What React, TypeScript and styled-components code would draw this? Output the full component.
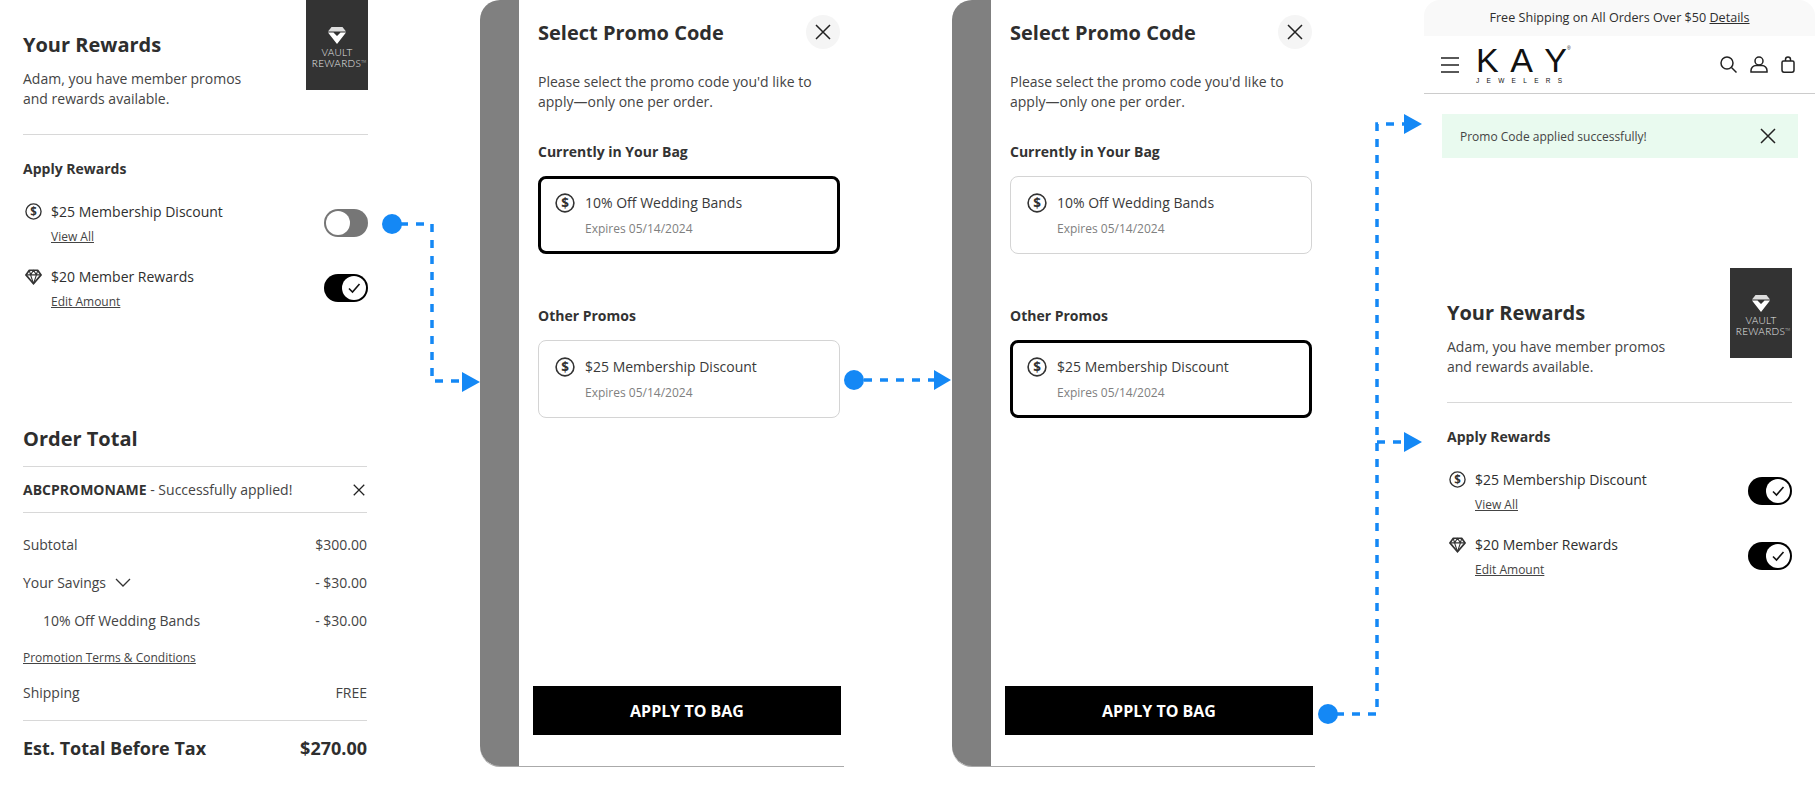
import styled, { createGlobalStyle } from 'styled-components'

const GlobalStyle = createGlobalStyle`
  html, body {
    margin: 0;
    padding: 0;
    background: #fff;
    font-family: "Open Sans", "Liberation Sans", sans-serif;
    color: #333;
  }
`

const Page = styled.div`
  position: relative;
  display: flex;
  align-items: flex-start;
  width: 1815px;
  height: 791px;
  overflow: hidden;
`

const LeftColumn = styled.div`
  flex: none;
  width: 345px;
  margin-left: 23px;
`

const RightColumn = styled.div`
  flex: none;
  width: 391px;
  margin-left: 109px;
`

// rewards panel, used in the first and last column
const RewardsPanel = styled.section<{ $top?: number; $left?: number }>`
  width: 345px;
  padding-top: ${(p) => p.$top ?? 0}px;
  padding-left: ${(p) => p.$left ?? 0}px;
`

const RewardsHeader = styled.div`
  display: flex;
  justify-content: space-between;
  height: 90px;
`

const PanelTitle = styled.h2`
  margin: 0;
  font-size: 20px;
  line-height: 28px;
  font-weight: 700;
  color: #2e2e2e;
`

const RewardsIntro = styled.div`
  padding-top: 31px;
`

const BodyText = styled.p`
  margin: 10px 0 0;
  font-size: 14px;
  line-height: 20px;
  color: #444;
`

const Badge = styled.div`
  display: flex;
  flex-direction: column;
  align-items: center;
  width: 62px;
  height: 90px;
  padding-top: 27px;
  box-sizing: border-box;
  background: #333;
  color: #e8e8e8;
  font-family: Lato, "Liberation Sans", sans-serif;
  font-size: 10px;
  font-weight: 300;
  line-height: 11px;
  letter-spacing: 0.3px;
  text-align: center;
`

const BadgeText = styled.span`
  margin-top: 3px;
`

const TradeMark = styled.sup`
  margin-right: -4px;
  font-size: 3px;
  line-height: 0;
`

const Rule = styled.hr<{ $mt?: number }>`
  height: 1px;
  margin: ${(p) => p.$mt ?? 0}px 0 0;
  border: 0;
  background: #d8d8d8;
`

const SectionLabel = styled.h3<{ $mt?: number }>`
  margin: ${(p) => p.$mt ?? 0}px 0 0;
  font-size: 14px;
  line-height: 20px;
  font-weight: 700;
  color: #333;
`

const RewardList = styled.div`
  margin-top: 23px;
`

const RewardRow = styled.div`
  display: grid;
  grid-template-columns: 28px 1fr 44px;
  height: 65px;
`

const RewardIcon = styled.div`
  padding: 1px 0 0 2px;
`

const RewardTitle = styled.div`
  font-size: 14px;
  line-height: 20px;
  color: #2e2e2e;
`

const SmallLink = styled.a`
  display: block;
  font-size: 12px;
  line-height: 18px;
  color: #444;
  text-decoration: underline;
`

const RewardLink = styled(SmallLink)`
  margin-top: 6px;
`

const Toggle = styled.div<{ $on: boolean }>`
  display: flex;
  align-items: center;
  justify-content: ${(p) => (p.$on ? 'flex-end' : 'flex-start')};
  width: 44px;
  height: 28px;
  margin-top: 7px;
  padding: 2px;
  box-sizing: border-box;
  border-radius: 14px;
  background: ${(p) => (p.$on ? '#000' : '#767676')};
`

const ToggleKnob = styled.div`
  display: flex;
  align-items: center;
  justify-content: center;
  width: 24px;
  height: 24px;
  border-radius: 50%;
  background: #fff;
`

// order total
const OrderTotal = styled.section`
  width: 344px;
  margin-top: 93px;
`

const TitleRule = styled(Rule)`
  margin-top: 13px;
`

const PromoRow = styled.div`
  display: flex;
  align-items: center;
  justify-content: space-between;
  height: 46px;
  padding-right: 2px;
  box-sizing: border-box;
  border-bottom: 1px solid #d8d8d8;
  font-size: 14px;
  color: #444;
`

const PromoName = styled.strong`
  font-weight: 700;
  color: #333;
`

const SummaryRows = styled.div`
  padding-top: 12px;
`

const SummaryRow = styled.div<{ $indent?: boolean }>`
  display: flex;
  align-items: center;
  justify-content: space-between;
  height: 38px;
  padding-left: ${(p) => (p.$indent ? 20 : 0)}px;
  font-size: 14px;
  color: #444;
`

const SavingsLabel = styled.span`
  display: flex;
  align-items: center;
  gap: 9px;
`

const TermsLink = styled(SmallLink)`
  height: 34px;
  line-height: 38px;
`

const TotalRow = styled.div`
  display: flex;
  align-items: center;
  justify-content: space-between;
  height: 54px;
  font-size: 18px;
  font-weight: 700;
  color: #2e2e2e;
`

// promo modal
const Modal = styled.section<{ $ml: number; $width: number }>`
  flex: none;
  display: flex;
  width: ${(p) => p.$width}px;
  height: 767px;
  margin-left: ${(p) => p.$ml}px;
  box-sizing: border-box;
  border-bottom: 1px solid #aaa;
  border-radius: 0 0 0 20px;
`

const ModalStrip = styled.div`
  flex: none;
  width: 39px;
  background: #808080;
  border-radius: 20px 0 0 20px;
`

const ModalBody = styled.div`
  display: flex;
  flex: 1;
  flex-direction: column;
  padding: 15px 0 31px 19px;
  box-sizing: border-box;
`

const ModalHeader = styled.div`
  display: flex;
  align-items: center;
  justify-content: space-between;
  width: 302px;
  height: 34px;
`

const ModalTitle = styled(PanelTitle)`
  padding-top: 2px;
`

const CloseCircle = styled.div`
  display: flex;
  align-items: center;
  justify-content: center;
  width: 34px;
  height: 34px;
  border-radius: 50%;
  background: #f5f5f5;
`

const ModalText = styled(BodyText)`
  width: 302px;
  margin-top: 23px;
`

const PromoCard = styled.div<{ $selected: boolean }>`
  display: grid;
  grid-template-columns: 30px 1fr;
  width: 302px;
  height: 78px;
  margin-top: 14px;
  box-sizing: border-box;
  padding: ${(p) => (p.$selected ? '14px 0 0 14px' : '16px 0 0 16px')};
  border: ${(p) => (p.$selected ? '3px solid #000' : '1px solid #d4d4d4')};
  border-radius: 8px;
`

const CardTitle = styled.div`
  font-size: 14px;
  line-height: 20px;
  color: #3a3a3a;
`

const CardExpiry = styled.div`
  margin-top: 7px;
  font-size: 12px;
  line-height: 18px;
  color: #808080;
`

const ApplyButton = styled.button`
  width: 308px;
  height: 49px;
  margin: auto 0 0 -5px;
  border: 0;
  background: #000;
  color: #fff;
  font-family: inherit;
  font-size: 16px;
  font-weight: 700;
`

// site header in the last column
const PromoStrip = styled.div`
  height: 36px;
  border-radius: 16px 16px 0 0;
  background: #f9f9f9;
  font-size: 12.6px;
  line-height: 36px;
  text-align: center;
  color: #2e2e2e;
`

const StripLink = styled.a`
  text-decoration: underline;
`

const SiteHeader = styled.header`
  display: flex;
  align-items: center;
  height: 57px;
  padding: 0 20px 0 17px;
  border-bottom: 1px solid #ccc;
`

const Logo = styled.div`
  margin-left: 17px;
  color: #111;
  font-family: "Liberation Sans", Arial, sans-serif;
`

const LogoMark = styled.div`
  font-size: 34px;
  line-height: 30px;
  letter-spacing: 11.5px;
`

const LogoLastLetter = styled.span`
  letter-spacing: 0;
`

const LogoReg = styled.sup`
  font-size: 5px;
  letter-spacing: 0;
  line-height: 0;
  vertical-align: 22px;
`

const LogoSub = styled.div`
  margin-top: 2px;
  font-size: 6.5px;
  line-height: 7px;
  letter-spacing: 7.3px;
`

const HeaderIcons = styled.div`
  display: flex;
  align-items: center;
  gap: 13px;
  margin-left: auto;
`

const SuccessAlert = styled.div`
  display: flex;
  align-items: center;
  justify-content: space-between;
  width: 356px;
  height: 44px;
  margin: 20px 0 0 18px;
  padding: 0 22px 0 18px;
  box-sizing: border-box;
  background: #e9faef;
  font-size: 12px;
  color: #444;
`

const Connectors = styled.svg`
  position: absolute;
  top: 0;
  left: 0;
  pointer-events: none;
`

function DollarIcon({ size = 17 }: { size?: number }) {
  return (
    <svg width={size} height={size} viewBox="0 0 20 20">
      <circle cx="10" cy="10" r="8.9" fill="none" stroke="#333" strokeWidth="1.6" />
      <text x="10" y="14.800" textAnchor="middle" fontSize="13.500" fontWeight="700" fill="#333" fontFamily="Open Sans">$</text>
    </svg>
  )
}

function GemIcon() {
  return (
    <svg width="17" height="16" viewBox="0 0 20 19" fill="none" stroke="#333" strokeWidth="2" strokeLinejoin="round">
      <path d="M5 1.500h10l4 5.500-9 10.500L1 7z" />
      <path d="M1 7h18M6.500 7 10 17.500 13.500 7M5 1.500 6.500 7 10 1.500 13.500 7 15 1.500" strokeWidth="1.300" />
    </svg>
  )
}

function CloseIcon({ size = 16, width = 1.5 }: { size?: number; width?: number }) {
  return (
    <svg width={size} height={size} viewBox="0 0 16 16" stroke="#222" strokeWidth={width}>
      <path d="M1 1l14 14M15 1 1 15" />
    </svg>
  )
}

function ToggleSwitch({ on }: { on: boolean }) {
  return (
    <Toggle $on={on}>
      <ToggleKnob>
        {on && (
          <svg width="14" height="12" viewBox="0 0 14 12" fill="none" stroke="#111" strokeWidth="1.6">
            <path d="M2 6.500 5.500 10 12.500 2" />
          </svg>
        )}
      </ToggleKnob>
    </Toggle>
  )
}

function Rewards({ top, left, firstOn }: { top?: number; left?: number; firstOn: boolean }) {
  return (
    <RewardsPanel $top={top} $left={left}>
      <RewardsHeader>
        <RewardsIntro>
          <PanelTitle>Your Rewards</PanelTitle>
          <BodyText>
            Adam, you have member promos
            <br />
            and rewards available.
          </BodyText>
        </RewardsIntro>
        <Badge>
          <svg width="18" height="17" viewBox="0 0 18 17">
            <path d="M3.500 0h11L18 4.500H0z" fill="#ddd" />
            <path d="M0 5.500h5.500L9 9l3.500-3.500H18L9 17z" fill="#fff" />
          </svg>
          <BadgeText>
            VAULT
            <br />
            REWARDS<TradeMark>TM</TradeMark>
          </BadgeText>
        </Badge>
      </RewardsHeader>
      <Rule $mt={44} />
      <SectionLabel $mt={24}>Apply Rewards</SectionLabel>
      <RewardList>
        <RewardRow>
          <RewardIcon>
            <DollarIcon />
          </RewardIcon>
          <div>
            <RewardTitle>$25 Membership Discount</RewardTitle>
            <RewardLink>View All</RewardLink>
          </div>
          <ToggleSwitch on={firstOn} />
        </RewardRow>
        <RewardRow>
          <RewardIcon>
            <GemIcon />
          </RewardIcon>
          <div>
            <RewardTitle>$20 Member Rewards</RewardTitle>
            <RewardLink>Edit Amount</RewardLink>
          </div>
          <ToggleSwitch on />
        </RewardRow>
      </RewardList>
    </RewardsPanel>
  )
}

function Card({ title, selected }: { title: string; selected: boolean }) {
  return (
    <PromoCard $selected={selected}>
      <DollarIcon size={20} />
      <div>
        <CardTitle>{title}</CardTitle>
        <CardExpiry>Expires 05/14/2024</CardExpiry>
      </div>
    </PromoCard>
  )
}

function PromoModal({ ml, width, selected }: { ml: number; width: number; selected: 'bag' | 'other' }) {
  return (
    <Modal $ml={ml} $width={width}>
      <ModalStrip />
      <ModalBody>
        <ModalHeader>
          <ModalTitle>Select Promo Code</ModalTitle>
          <CloseCircle>
            <CloseIcon />
          </CloseCircle>
        </ModalHeader>
        <ModalText>Please select the promo code you'd like to apply—only one per order.</ModalText>
        <SectionLabel $mt={30}>Currently in Your Bag</SectionLabel>
        <Card title="10% Off Wedding Bands" selected={selected === 'bag'} />
        <SectionLabel $mt={52}>Other Promos</SectionLabel>
        <Card title="$25 Membership Discount" selected={selected === 'other'} />
        <ApplyButton>APPLY TO BAG</ApplyButton>
      </ModalBody>
    </Modal>
  )
}

export default function App() {
  return (
    <Page>
      <GlobalStyle />
      <LeftColumn>
        <Rewards firstOn={false} />
        <OrderTotal>
          <PanelTitle>Order Total</PanelTitle>
          <TitleRule />
          <PromoRow>
            <span>
              <PromoName>ABCPROMONAME</PromoName> - Successfully applied!
            </span>
            <CloseIcon size={12} width={1.7} />
          </PromoRow>
          <SummaryRows>
            <SummaryRow>
              <span>Subtotal</span>
              <span>$300.00</span>
            </SummaryRow>
            <SummaryRow>
              <SavingsLabel>
                Your Savings
                <svg width="16" height="9" viewBox="0 0 16 9" fill="none" stroke="#333" strokeWidth="1.300">
                  <path d="M1 1l7 7 7-7" />
                </svg>
              </SavingsLabel>
              <span>- $30.00</span>
            </SummaryRow>
            <SummaryRow $indent>
              <span>10% Off Wedding Bands</span>
              <span>- $30.00</span>
            </SummaryRow>
            <TermsLink>Promotion Terms &amp; Conditions</TermsLink>
            <SummaryRow>
              <span>Shipping</span>
              <span>FREE</span>
            </SummaryRow>
          </SummaryRows>
          <Rule $mt={9} />
          <TotalRow>
            <span>Est. Total Before Tax</span>
            <span>$270.00</span>
          </TotalRow>
        </OrderTotal>
      </LeftColumn>

      <PromoModal ml={112} width={364} selected="bag" />
      <PromoModal ml={108} width={363} selected="other" />

      <RightColumn>
        <PromoStrip>
          Free Shipping on All Orders Over $50 <StripLink>Details</StripLink>
        </PromoStrip>
        <SiteHeader>
          <svg width="18" height="16" viewBox="0 0 18 16" stroke="#222" strokeWidth="1.500">
            <path d="M0 1h18M0 8h18M0 15h18" />
          </svg>
          <Logo>
            <LogoMark>
              KA<LogoLastLetter>Y</LogoLastLetter>
              <LogoReg>®</LogoReg>
            </LogoMark>
            <LogoSub>JEWELERS</LogoSub>
          </Logo>
          <HeaderIcons>
            <svg width="17" height="17" viewBox="0 0 17 17" fill="none" stroke="#222" strokeWidth="1.500">
              <circle cx="7" cy="7" r="6" />
              <path d="M11.500 11.500 16.500 16.500" />
            </svg>
            <svg width="18" height="17" viewBox="0 0 18 17" fill="none" stroke="#222" strokeWidth="1.500">
              <circle cx="9" cy="5" r="4" />
              <path d="M1 16v-1.500a5 5 0 0 1 5-5h6a5 5 0 0 1 5 5V16z" />
            </svg>
            <svg width="14" height="17" viewBox="0 0 14 17" fill="none" stroke="#222" strokeWidth="1.500">
              <path d="M1 6.500C1 5.500 1.500 5 2.500 5h9c1 0 1.500.5 1.500 1.500V14c0 1.500-1 2.200-2 2.200H3c-1 0-2-.7-2-2.200z" />
              <path d="M4.500 5V3.500a2.500 2.500 0 0 1 5 0V5" />
            </svg>
          </HeaderIcons>
        </SiteHeader>
        <SuccessAlert>
          Promo Code applied successfully!
          <CloseIcon />
        </SuccessAlert>
        <Rewards top={110} left={23} firstOn />
      </RightColumn>

      <Connectors width="1815" height="791" viewBox="0 0 1815 791">
        <g fill="none" stroke="#1488f5" strokeWidth="3.500" strokeDasharray="8 8">
          <path d="M400 224H432V381H464" />
          <path d="M864 380H936" />
          <path d="M1336 714H1377V124H1406" />
          <path d="M1377 442H1406" />
        </g>
        <g fill="#1488f5">
          <circle cx="392" cy="224" r="10" />
          <circle cx="854" cy="380" r="10" />
          <circle cx="1328" cy="714" r="10" />
          <path d="M462 372 480 382 462 392z" />
          <path d="M934 370 951 380 934 390z" />
          <path d="M1404 114 1422 124 1404 134z" />
          <path d="M1404 432 1422 442 1404 452z" />
        </g>
      </Connectors>
    </Page>
  )
}
